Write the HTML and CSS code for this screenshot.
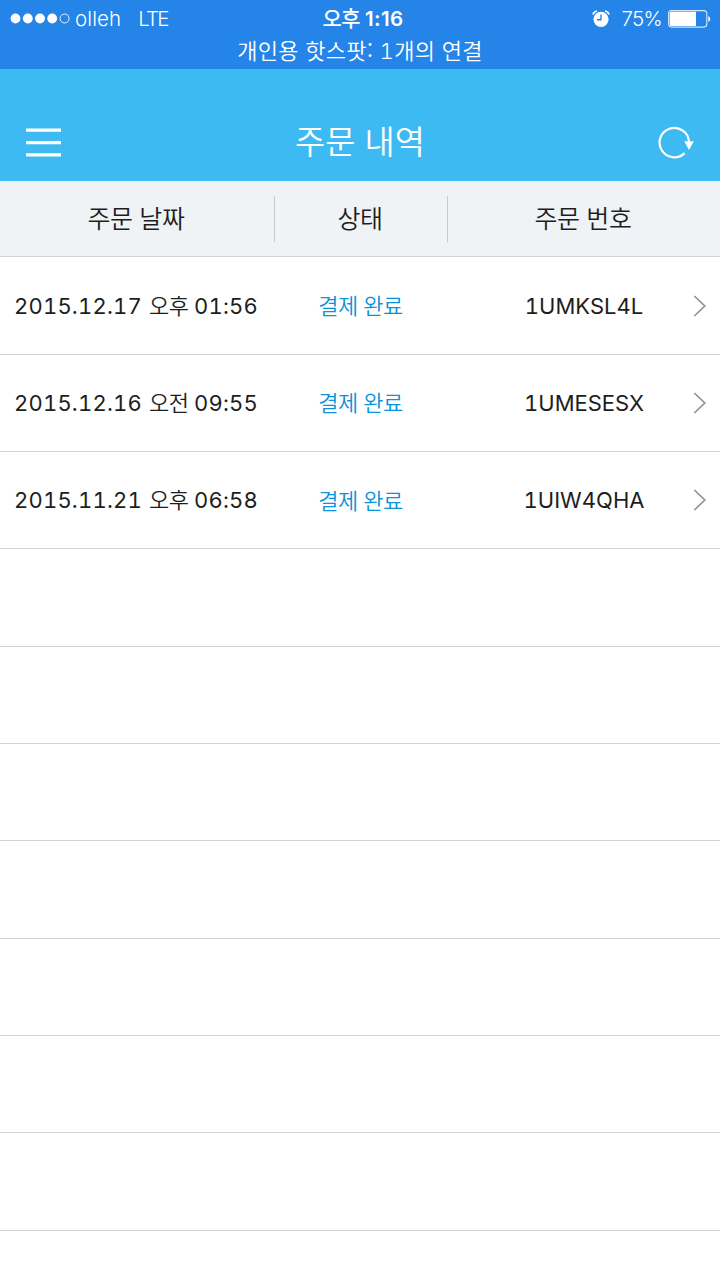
FILE: index.html
```html
<!DOCTYPE html>
<html lang="ko">
<head>
<meta charset="utf-8">
<title>주문 내역</title>
<link rel="stylesheet" href="styles.css">
</head>
<body>
<div class="status">
  <div class="status-row">
    <div class="carrier">
      <svg class="dots" width="60" height="12" viewBox="0 0 60 12"><g fill="#fff"><circle cx="5.5" cy="5.5" r="4.9"/><circle cx="17.8" cy="5.5" r="4.9"/><circle cx="30" cy="5.5" r="4.9"/><circle cx="42.2" cy="5.5" r="4.9"/></g><circle cx="54.6" cy="5.5" r="4.5" fill="none" stroke="#fff" stroke-width=".9"/></svg>
      <span class="olleh">olleh</span><span class="lte">LTE</span>
    </div>
    <div class="clock"><span class="ko">오후</span><span>1:16</span></div>
    <div class="power">
      <svg class="alarm" width="18" height="18" viewBox="0 0 18 18"><circle cx="9" cy="9.3" r="7.6" fill="#fff"/><path d="M9 4.5V9.8H5" fill="none" stroke="#2484e8" stroke-width="1.4"/><path d="M1 4.5Q1.6 1.6 5 1M17 4.5Q16.4 1.6 13 1" fill="none" stroke="#fff" stroke-width="1.7"/></svg>
      <span class="percent">75%</span>
      <svg class="battery" width="43" height="18" viewBox="0 0 43 18"><rect x=".6" y=".6" width="38.2" height="16.5" rx="3" fill="none" stroke="#fff" stroke-opacity=".8" stroke-width="1.1"/><path d="M3.5 1.7H28V16H3.5Q1.7 16 1.7 14V3.7Q1.7 1.7 3.5 1.7Z" fill="#fff"/><path d="M40.3 6Q42.3 7 42.3 9T40.3 12Z" fill="#fff"/></svg>
    </div>
  </div>
  <div class="hotspot">개인용 핫스팟: <span class="one">1</span>개의 연결</div>
</div>
<header class="nav">
  <svg width="36" height="30" viewBox="0 0 36 30"><path d="M0 2.2H35M0 14.6H35M0 26.8H35" stroke="#fff" stroke-width="3.2"/></svg>
  <h1>주문 내역</h1>
  <svg width="36" height="34" viewBox="0 0 36 34"><path d="M26.6 27.1A14.7 14.7 0 1 1 31 16" fill="none" stroke="#fff" stroke-width="2.2"/><path d="M26.3 15.3H35.8L31 24Z" fill="#fff"/></svg>
</header>
<div class="heads">
  <div class="head">주문 날짜</div><div class="head">상태</div><div class="head">주문 번호</div>
</div>
<main class="list">
  <div class="row"><div class="date"><span class="day">2015.12.17</span><span class="ko">오후</span><span class="time">01:56</span></div><div class="state">결제 완료</div><div class="code">1UMKSL4L</div><svg class="chev" width="14" height="24" viewBox="0 0 14 24"><path d="M2.3 2L12.8 12L2.3 22"/></svg></div>
  <div class="row"><div class="date"><span class="day">2015.12.16</span><span class="ko">오전</span><span class="time">09:55</span></div><div class="state">결제 완료</div><div class="code">1UMESESX</div><svg class="chev" width="14" height="24" viewBox="0 0 14 24"><path d="M2.3 2L12.8 12L2.3 22"/></svg></div>
  <div class="row"><div class="date"><span class="day">2015.11.21</span><span class="ko">오후</span><span class="time">06:58</span></div><div class="state">결제 완료</div><div class="code">1UIW4QHA</div><svg class="chev" width="14" height="24" viewBox="0 0 14 24"><path d="M2.3 2L12.8 12L2.3 22"/></svg></div>
  <div class="row"></div><div class="row"></div><div class="row"></div><div class="row"></div><div class="row"></div><div class="row"></div><div class="row"></div>
</main>
</body>
</html>
```
FILE: styles.css
```css
* { box-sizing: border-box; }
body { margin: 0; width: 720px; height: 1279px; overflow: hidden; background: #fff; color: #1c1e22; font-family: Inter, "Noto Sans CJK KR", sans-serif; font-variant-numeric: tabular-nums; }
svg { display: block; flex: none; }
.ko { font-family: "Noto Sans CJK KR", sans-serif; }
.status { height: 69px; background: #2484e8; color: #fff; }
.status-row { height: 36px; display: grid; grid-template-columns: 1fr 90px 1fr; align-items: center; line-height: 37px; }
.carrier { display: flex; align-items: center; padding-left: 10px; font-weight: 300; font-size: 20.5px; }
.olleh { margin-left: 5px; letter-spacing: .1px; }
.lte { margin-left: 17px; letter-spacing: -1.8px; }
.clock { display: flex; gap: 5px; justify-content: center; font-weight: 600; font-size: 20.5px; white-space: nowrap; padding-left: 6px; font-variant-numeric: normal; letter-spacing: .4px; }
.clock .ko { font-size: 21px; line-height: 34px; font-weight: 500; letter-spacing: -.6px; }
.power { display: flex; align-items: center; justify-content: flex-end; padding-right: 9px; font-weight: 300; font-size: 20.5px; font-variant-numeric: normal; }
.percent { margin: 0 6px 0 11px; letter-spacing: -.7px; }
.hotspot { height: 30px; text-align: center; font: 350 22px/26px "Noto Sans CJK KR", sans-serif; letter-spacing: .3px; }
.one { font-family: Inter, sans-serif; font-weight: 300; font-variant-numeric: tabular-nums; }
.nav { height: 112px; padding: 35px 26px 0 26px; display: flex; align-items: center; justify-content: space-between; background: #3dbaf1; color: #fff; }
.nav h1 { margin: -5px 0 0; font: 350 32.8px/40px "Noto Sans CJK KR", sans-serif; }
.heads { height: 76px; border-bottom: 1px solid #d0d2d5; background: #eff3f6; display: grid; grid-template-columns: 275px 173px 1fr; padding-top: 15px; }
.head { height: 46px; padding-right: 2px; text-align: center; font: 350 25px/43px "Noto Sans CJK KR", sans-serif; border-right: 1px solid #c8cacd; letter-spacing: -.4px; }
.head:last-child { border: 0; }
.list { padding-top: .4px; }
.row { height: 97.33px; border-bottom: 1px solid #d0d1d2; display: grid; grid-template-columns: 275px 171px 246px 1fr; align-items: center; }
.date { display: flex; align-items: center; padding-left: 14px; font-size: 22px; font-weight: 400; line-height: 32px; }
.day { width: 135px; letter-spacing: .2px; }
.date .ko { width: 45px; font-size: 22px; font-weight: 350; line-height: 28px; padding-bottom: 4px; letter-spacing: -.5px; }
.time { letter-spacing: .2px; }
.state { text-align: center; padding-bottom: 3px; color: #0a93da; font: 350 22px/30px "Noto Sans CJK KR", sans-serif; letter-spacing: -.5px; }
.code { text-align: center; font-size: 22px; font-weight: 400; padding-left: 30px; letter-spacing: 0; }
.chev path { fill: none; stroke: #929296; stroke-width: 1.7; }
```
